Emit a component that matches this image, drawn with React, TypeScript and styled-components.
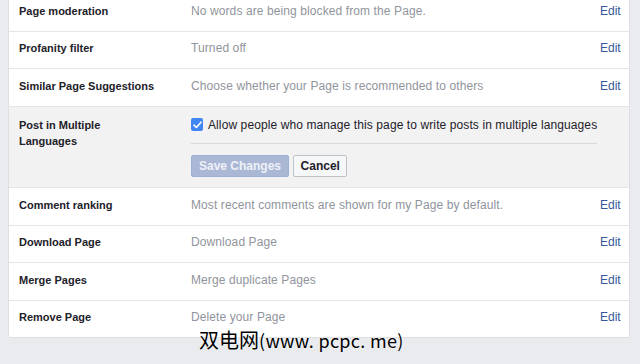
import React from "react";
import styled, { createGlobalStyle } from "styled-components";

const GlobalStyle = createGlobalStyle`
    html, body {
        margin: 0;
        padding: 0;
        background: #e9ebee;
    }
    body {
        font-family: "Liberation Sans", Arial, sans-serif;
        font-size: 12px;
        color: #1d2129;
    }
`

const Page = styled.div`
    position: relative;
    width: 640px;
    height: 364px;
    overflow: hidden;
    padding: 0 10px 0 8px;
    box-sizing: border-box;
`

const Card = styled.div`
    margin-top: -6px;
    background: #fff;
    border: 1px solid #dddfe2;
    border-top: none;
    border-radius: 0 0 3px 3px;
`

const Row = styled.div<{ $open?: boolean }>`
    display: grid;
    grid-template-columns: 172px 1fr 20px;
    padding: ${p => (p.$open ? "10px 9px 10px 10px" : "8.5px 9px 12px 10px")};
    background: ${p => (p.$open ? "#f2f2f2" : "#fff")};
    border-bottom: 1px solid #e5e5e5;

    &:last-child {
        border-bottom: none;
    }
`

const Label = styled.div`
    max-width: 138px;
    font-size: 11px;
    font-weight: bold;
    line-height: 16px;
    color: #1d2129;
`

const Value = styled.div`
    line-height: 16px;
    letter-spacing: 0.1px;
    color: #90949c;
`

const EditLink = styled.a`
    line-height: 16px;
    color: #365899;
    text-decoration: none;
    cursor: pointer;
`

const CheckLine = styled.label`
    display: flex;
    align-items: center;
    gap: 5px;
    line-height: 16px;
    letter-spacing: 0.1px;
    color: #1d2129;
`

const CheckBox = styled.span`
    display: inline-flex;
    align-items: center;
    justify-content: center;
    width: 12px;
    height: 13px;
    border-radius: 2px;
    background: #4285f4;
`

const Separator = styled.div`
    height: 1px;
    background: #d8d8d8;
    margin: 10.5px 3px 11px 0;
`

const Buttons = styled.div`
    display: flex;
    gap: 4px;
`

const Button = styled.button<{ $primary?: boolean }>`
    height: 22px;
    padding: 0 ${p => (p.$primary ? "7px" : "6.5px")};
    font-family: "Liberation Sans", Arial, sans-serif;
    font-size: 12px;
    font-weight: bold;
    border-radius: 2px;
    border: 1px solid ${p => (p.$primary ? "#9cb0d6" : "#bec1c6")};
    background: ${p => (p.$primary ? "#aab8d5" : "#f6f7f9")};
    color: ${p => (p.$primary ? "#eef1f7" : "#1d2129")};
    cursor: pointer;
`

const Watermark = styled.div`
    position: absolute;
    left: 199px;
    top: 327px;
    font-family: "Noto Sans CJK SC", sans-serif;
    font-size: 20px;
    line-height: 26px;
    color: #000;
    text-shadow: 0 0 2px #fff;
    white-space: nowrap;
`

const Latin = styled.span`
    font-size: 18px;
    letter-spacing: 0.3px;
`

const settings = [
    { label: "Page moderation", value: "No words are being blocked from the Page." },
    { label: "Profanity filter", value: "Turned off" },
    { label: "Similar Page Suggestions", value: "Choose whether your Page is recommended to others" },
    { label: "Post in Multiple Languages", value: "", open: true },
    { label: "Comment ranking", value: "Most recent comments are shown for my Page by default." },
    { label: "Download Page", value: "Download Page" },
    { label: "Merge Pages", value: "Merge duplicate Pages" },
    { label: "Remove Page", value: "Delete your Page" },
];

const Check = () => (
    <svg width="9" height="8" viewBox="0 0 9 8">
        <path d="M1 4.2 L3.4 6.5 L8 1.2" stroke="#fff" strokeWidth="1.6" fill="none" strokeLinecap="round" strokeLinejoin="round" />
    </svg>
);

export default function App() {
    return (
        <>
            <GlobalStyle />
            <Page>
                <Card>
                    {settings.map((item, index) => {
                        if (item.open) {
                            return (
                                <Row key={index} $open>
                                    <Label>{item.label}</Label>
                                    <div>
                                        <CheckLine>
                                            <CheckBox><Check /></CheckBox>
                                            Allow people who manage this page to write posts in multiple languages
                                        </CheckLine>
                                        <Separator />
                                        <Buttons>
                                            <Button $primary>Save Changes</Button>
                                            <Button>Cancel</Button>
                                        </Buttons>
                                    </div>
                                    <div />
                                </Row>
                            )
                        }
                        return (
                            <Row key={index}>
                                <Label>{item.label}</Label>
                                <Value>{item.value}</Value>
                                <EditLink>Edit</EditLink>
                            </Row>
                        )
                    })}
                </Card>
                <Watermark>双电网<Latin>(www. pcpc. me)</Latin></Watermark>
            </Page>
        </>
    );
}
